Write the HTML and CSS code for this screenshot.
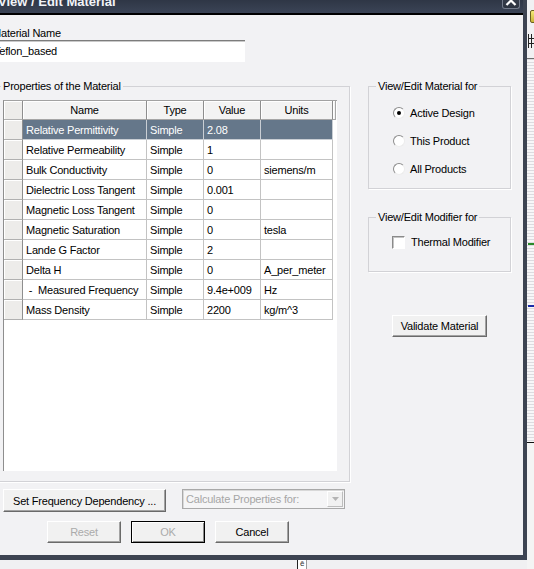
FILE: index.html
```html
<!DOCTYPE html>
<html>
<head>
<meta charset="utf-8">
<title>View / Edit Material</title>
<link rel="stylesheet" href="styles.css">
</head>
<body>
<div class="backapp">
  <div class="ba-top">
    <div class="ba-icon"></div>
    <div class="ba-grid"></div>
  </div>
  <div class="ba-hatch">
    <div class="ba-green"></div>
    <div class="ba-blue"></div>
  </div>
  <div class="ba-bottom"></div>
</div>
<div class="below-box"><span>ē</span></div>

<div class="window">
  <div class="titlebar">
    <span class="title">View / Edit Material</span>
    <div class="close">
      <svg width="18" height="19" viewBox="0 0 18 19"><polyline points="4.5,15 9,10.5 13.5,15" fill="none" stroke="#fff" stroke-width="2.2"/></svg>
    </div>
  </div>
  <div class="client">
    <div class="lbl">Material Name</div>
    <div class="textbox">Teflon_based</div>
    <div class="main">
      <fieldset class="grp props">
        <legend>Properties of the Material</legend>
        <div class="gridbox">
          <table class="grid">
            <colgroup>
              <col class="c-rh"><col class="c-name"><col class="c-type"><col class="c-val"><col class="c-unit"><col class="c-stub">
            </colgroup>
            <thead>
              <tr><th class="rh"></th><th>Name</th><th>Type</th><th>Value</th><th>Units</th><th class="stub"></th></tr>
            </thead>
            <tbody>
              <tr class="sel"><td class="rh"></td><td>Relative Permittivity</td><td>Simple</td><td>2.08</td><td></td></tr>
              <tr><td class="rh"></td><td>Relative Permeability</td><td>Simple</td><td>1</td><td></td></tr>
              <tr><td class="rh"></td><td>Bulk Conductivity</td><td>Simple</td><td>0</td><td>siemens/m</td></tr>
              <tr><td class="rh"></td><td>Dielectric Loss Tangent</td><td>Simple</td><td>0.001</td><td></td></tr>
              <tr><td class="rh"></td><td>Magnetic Loss Tangent</td><td>Simple</td><td>0</td><td></td></tr>
              <tr><td class="rh"></td><td>Magnetic Saturation</td><td>Simple</td><td>0</td><td>tesla</td></tr>
              <tr><td class="rh"></td><td>Lande G Factor</td><td>Simple</td><td>2</td><td></td></tr>
              <tr><td class="rh"></td><td>Delta H</td><td>Simple</td><td>0</td><td>A_per_meter</td></tr>
              <tr><td class="rh"></td><td>&nbsp;-&nbsp; Measured Frequency</td><td>Simple</td><td>9.4e+009</td><td>Hz</td></tr>
              <tr><td class="rh"></td><td>Mass Density</td><td>Simple</td><td>2200</td><td>kg/m^3</td></tr>
            </tbody>
          </table>
        </div>
      </fieldset>
      <div class="side">
        <fieldset class="grp scope">
          <legend>View/Edit Material for</legend>
          <div class="opt first"><span class="radio on"></span><span class="opt-text">Active Design</span></div>
          <div class="opt"><span class="radio"></span><span class="opt-text">This Product</span></div>
          <div class="opt"><span class="radio"></span><span class="opt-text">All Products</span></div>
        </fieldset>
        <fieldset class="grp modifier">
          <legend>View/Edit Modifier for</legend>
          <div class="chk-row"><span class="check"></span><span class="chk-text">Thermal Modifier</span></div>
        </fieldset>
        <button class="btn validate">Validate Material</button>
      </div>
    </div>
    <div class="row1">
      <button class="btn freq">Set Frequency Dependency ...</button>
      <div class="combo">
        <span class="combo-text">Calculate Properties for:</span>
        <span class="drop"><svg width="7" height="4" viewBox="0 0 7 4"><polygon points="0,0 7,0 3.5,4" fill="#b4b4b4"/></svg></span>
      </div>
    </div>
    <div class="row2">
      <button class="btn dis">Reset</button>
      <button class="btn dis default">OK</button>
      <button class="btn">Cancel</button>
    </div>
  </div>
</div>
</body>
</html>
```
FILE: styles.css
```css
html, body {
  margin: 0;
  padding: 0;
}
body {
  width: 534px;
  height: 569px;
  overflow: hidden;
  position: relative;
  background: #f0f0f2;
  font-family: "Liberation Sans", Arial, sans-serif;
  font-size: 11px;
  letter-spacing: -0.2px;
  color: #000;
}

/* background application (behind dialog) */
.backapp {
  position: absolute;
  left: 527px;
  top: 0;
  width: 7px;
  height: 569px;
  display: flex;
  flex-direction: column;
  background: #f1f1f3;
}
.ba-top {
  height: 58px;
  border-bottom: 1px solid #6e6e6e;
}
.ba-icon {
  margin: 10px 0 0 3px;
  width: 5px;
  height: 11px;
  background: linear-gradient(#f4ea7a, #c9b436);
  border: 1px solid #6b6020;
  border-radius: 2px 0 0 2px;
}
.ba-grid {
  margin: 11px 0 0 1px;
  height: 14px;
  background:
    repeating-linear-gradient(90deg, #222 0 1px, transparent 1px 3px),
    linear-gradient(#222, #222) 0 4px / 100% 1px no-repeat,
    linear-gradient(#222, #222) 0 9px / 100% 1px no-repeat;
}
.ba-hatch {
  height: 383px;
  position: relative;
  background: repeating-linear-gradient(#dcdce0 0 1px, #f7f7f8 1px 3px);
}
.ba-green {
  position: absolute;
  left: 1px; right: 0;
  top: 184px;
  height: 2px;
  background: #2a8a2a;
}
.ba-blue {
  position: absolute;
  left: 1px; right: 0;
  top: 246px;
  height: 2px;
  background: #1a2aa8;
}
.ba-bottom {
  flex: 1;
  border-top: 1px solid #111;
  background: #f4f4f4;
}
.below-box {
  position: absolute;
  left: 297px;
  top: 559px;
  width: 8px;
  height: 12px;
  border-left: 1px solid #222;
  border-right: 1px solid #999;
  background: #fff;
  font-size: 8px;
  line-height: 10px;
  text-align: center;
  color: #333;
}

/* dialog window */
.window {
  position: absolute;
  left: -20px;
  top: -10px;
  width: 543px;
  height: 565px;
  border-right: 4px solid #3d4452;
  border-bottom: 5px solid #3d4452;
  background: #f2f2f4;
  display: flex;
  flex-direction: column;
}
.titlebar {
  height: 25px;
  box-sizing: border-box;
  border-bottom: 2px solid #000;
  background: linear-gradient(#252c39, #3b4456);
  display: flex;
  align-items: flex-start;
  padding: 4px 0 0 18px;
}
.title {
  font-size: 13px;
  font-weight: bold;
  line-height: 15px;
  letter-spacing: 0;
  color: #f2f4f8;
}
.close {
  margin: -4px 3px 0 auto;
  width: 18px;
  height: 19px;
  box-sizing: border-box;
  border: 1px solid #737b8b;
  border-top: none;
  border-radius: 0 0 3px 3px;
  background: linear-gradient(#3f4757, #2c3340);
}
.close svg {
  display: block;
  margin-left: -1px;
}
.client {
  flex: 1;
  padding-left: 12px;
  display: flex;
  flex-direction: column;
  align-items: flex-start;
}
.lbl {
  margin-top: 12px;
  line-height: 13px;
  height: 13px;
}
.textbox {
  width: 253px;
  height: 22px;
  box-sizing: border-box;
  background: #fff;
  border-top: 1px solid #7c7c7c;
  box-shadow: inset 0 1px 0 #c9c9c9;
  padding-left: 2px;
  line-height: 20px;
}

.main {
  margin-top: 17px;
  display: flex;
  align-items: flex-start;
}
.grp {
  margin: 0;
  padding: 0;
  min-width: 0;
  border: 1px solid #d2d2d6;
  box-shadow: 1px 1px 0 #fff;
}
.grp legend {
  padding: 0 2px;
  margin-left: 7px;
  line-height: 14px;
  height: 14px;
}
.props {
  margin-left: 1px;
  width: 357px;
  box-sizing: border-box;
  padding-bottom: 10px;
}
.gridbox {
  margin: 7px 0 0 9px;
  width: 334px;
  height: 371px;
  box-sizing: border-box;
  border-top: 1px solid #a2a2a2;
  border-left: 1px solid #8e8e8e;
  background: #fff;
}
.grid {
  border-collapse: separate;
  border-spacing: 0;
  table-layout: fixed;
  width: 332px;
}
.c-rh { width: 19px; }
.c-name { width: 124px; }
.c-type { width: 57px; }
.c-val { width: 57px; }
.c-unit { width: 72px; }
.c-stub { width: 3px; }

.grid th, .grid td {
  padding: 0 0 0 3px;
  box-sizing: border-box;
  white-space: nowrap;
  overflow: hidden;
  text-align: left;
  font-weight: normal;
}
.grid thead tr { height: 19px; }
.grid tbody tr { height: 20px; }
.grid th {
  background: #f3f3f3;
  border-right: 1px solid #8e8e8e;
  border-bottom: 1px solid #a6a6a6;
  box-shadow: inset 1px 1px 0 #fff;
  text-align: center;
  padding: 0;
}
.grid th.stub {
  border-right: 1px solid #a6a6a6;
}
.grid td {
  border-right: 1px solid #c3c3c3;
  border-bottom: 1px solid #c3c3c3;
}
.grid .rh {
  background: #edecea;
  border-right: 1px solid #8e8e8e;
  border-bottom: 1px solid #b0b0b0;
  box-shadow: inset 1px 1px 0 #fff;
  padding: 0;
}
.grid tr.sel td:not(.rh) {
  background: #65778a;
  color: #fff;
  border-color: #c9ced4;
}

.side {
  margin-left: 18px;
  display: flex;
  flex-direction: column;
  align-items: flex-start;
}
.scope {
  width: 143px;
  height: 110px;
  box-sizing: border-box;
}
.opt {
  margin-left: 24px;
  height: 28px;
  display: flex;
  align-items: center;
}
.opt.first { margin-top: 6px; }
.radio {
  width: 12px;
  height: 12px;
  box-sizing: border-box;
  border-radius: 50%;
  border: 1px solid;
  border-color: #8c8c8c #ececec #ececec #8c8c8c;
  background: #fff;
  display: flex;
  align-items: center;
  justify-content: center;
}
.radio.on::after {
  content: "";
  width: 4px;
  height: 4px;
  border-radius: 50%;
  background: #000;
}
.opt-text { margin-left: 5px; }

.modifier {
  margin-top: 21px;
  width: 143px;
  height: 62px;
  box-sizing: border-box;
}
.chk-row {
  margin: 12px 0 0 23px;
  height: 12px;
  display: flex;
  align-items: center;
}
.check {
  width: 13px;
  height: 13px;
  box-sizing: border-box;
  border: 1px solid;
  border-color: #8a8a8a #fff #fff #8a8a8a;
  box-shadow: inset 1px 1px 0 #c4c4c4;
  background: #fff;
}
.chk-text { margin-left: 6px; }

.btn {
  margin: 0;
  padding: 0;
  font: inherit;
  letter-spacing: inherit;
  color: #000;
  background: #f1f1f1;
  border: 1px solid;
  border-color: #fff #6a6a6a #6a6a6a #fff;
  box-shadow: inset -1px -1px 0 #a3a3a3;
  box-sizing: border-box;
  text-align: center;
}
.validate {
  margin: 43px 0 0 24px;
  width: 95px;
  height: 22px;
}

.row1 {
  margin-top: 7px;
  display: flex;
  align-items: flex-start;
}
.freq {
  margin-left: 11px;
  width: 163px;
  height: 23px;
}
.combo {
  margin-left: 16px;
  width: 163px;
  height: 20px;
  box-sizing: border-box;
  border: 1px solid #a9a9a9;
  box-shadow: inset 1px 1px 0 #d8d8d8;
  background: #f5f5f6;
  display: flex;
  align-items: center;
  padding: 0 1px 0 3px;
}
.combo-text {
  flex: 1;
  color: #a6a6a6;
}
.drop {
  width: 16px;
  height: 16px;
  box-sizing: border-box;
  border: 1px solid;
  border-color: #fff #bdbdbd #bdbdbd #fff;
  background: #f1f1f1;
  display: flex;
  align-items: center;
  justify-content: center;
}
.drop svg { display: block; }

.row2 {
  margin: 9px 0 0 55px;
  display: flex;
  gap: 10px;
}
.row2 .btn {
  width: 74px;
  height: 22px;
}
.btn.dis {
  color: #ababab;
}
.btn.default {
  border: 1px solid #000;
  box-shadow: inset 1px 1px 0 #fff, inset -1px -1px 0 #8a8a8a;
}
```
